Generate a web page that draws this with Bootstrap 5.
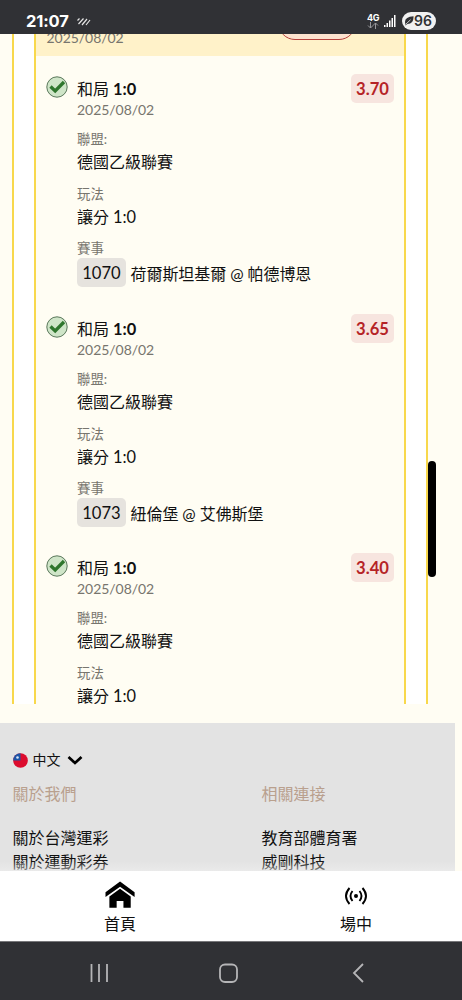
<!DOCTYPE html>
<html lang="zh-Hant">
<head>
<meta charset="utf-8">
<meta name="viewport" content="width=device-width, initial-scale=1">
<title>投注紀錄</title>
<link href="https://cdn.jsdelivr.net/npm/bootstrap@5.3.0/dist/css/bootstrap.min.css" rel="stylesheet">
<style>
body{font-family:Lato,"Noto Sans CJK TC",sans-serif;font-size:16px;line-height:24px;color:#111;background:#fffdf3;height:1000px;overflow:hidden}
svg{display:block;flex:none}
.status{height:34px;background:#303135;color:#fff;padding:8px 26px 0;font-family:Inter,sans-serif}
.clock{font-size:16.5px;font-weight:700;line-height:27px;letter-spacing:-.15px;width:51px}
.batt{width:34px;height:18px;background:#f1f1f1;color:#303135;font-size:14px;font-weight:600;line-height:18px;border-radius:9px;margin:4px 0 0 6px;padding-left:2px}
.net{font-size:9px;font-weight:700;line-height:8px;width:12px;letter-spacing:-.3px;padding-top:6px}
.slip-area{height:669.5px;padding:0 34px 0 12px}
.slip-outer,.slip-inner{border:solid #f8d84c;border-width:0 2px 0 2.5px;height:100%}
.slip-outer{background:#fff;padding:0 20px 0 20px}
.slip-inner{background:#fffdf3}
.slip-head{height:22px;background:#fff2c9;padding-left:10.5px}
.muted{color:#77756e}
.dt{font-size:14px;line-height:18px;letter-spacing:-.05px}
.slip-head .dt{line-height:7px}
.status-pill{width:78px;height:35px;border:1.3px solid #b5403a;border-radius:17px;background:#fde3cf;margin:-29px 48px 0 0}
.leg{height:239.6px;padding:21px 10px 0 10px}
.leg-main{margin-left:9px}
.tick{margin-top:-1px}
.ttl{line-height:24px;white-space:pre}
.num{font-size:16.4px;letter-spacing:-.1px}
.lbl{font-size:13.4px;line-height:20px;margin-top:10px}
.val{line-height:24px;margin:1px 0 0}
.odds{width:43px;height:29px;line-height:30px;margin-top:-3px;border-radius:5px;background:#f7e5df;color:#b52326;font-size:16.6px;font-weight:700;text-align:center}
.code{height:29px;width:49px;line-height:30px;border-radius:5px;background:#e6e3de;font-size:16.6px;text-align:center;margin-right:4.5px}
.game{line-height:31px;letter-spacing:-.06px}
.foot{margin-top:19.5px;width:455px;height:148px;background:#e3e3e3;padding:27px 0 0 12.5px;position:relative}
.foot-shade{height:10px;background:linear-gradient(#efefef00,#efefef90);left:0;right:0;bottom:0}
.lang{font-size:14px;line-height:20px}
.ftitle{color:#b9a08e;margin:12px 0 20px}
.tabs{height:71px;background:#fff;border-bottom:1px solid #77777a}
.tab1{width:240px}.tab2{width:232px}
.sys{height:58px;background:#303135}
.thumb{width:8px;height:116px;background:#000;border-radius:4px;left:427.5px;top:461px}
</style>
</head>
<body>
<header class="status d-flex">
 <span class="clock">21:07</span>
 <svg width="14" height="10" viewBox="0 0 14 10" style="margin-top:9px" fill="none" stroke="#e6e6e6" stroke-width="1.2"><path d="M.5 3.500 2.500 1.500M1.500 7 6.500 1.500M5 8 10 2M9 8 13 3"/></svg>
 <div class="net ms-auto">4G<svg width="12" height="7" viewBox="0 0 12 7" fill="none" stroke="#99999d" stroke-width="1"><path d="M3.500 0v6M1 3.500 3.500 6 6 3.500M8.500 7V1M6 3.500 8.500 1 11 3.500"/></svg></div>
 <svg width="12" height="14" viewBox="0 0 12 14" style="margin:6px 0 0 5px" fill="#fff"><path d="M0 11h1.500v2H0zM2.500 9h1.500v4H2.500zM5 6.500h1.500V13H5zM7.500 4H9v9H7.500zM10 1h1.500v12H10z"/></svg>
 <div class="batt d-flex align-items-center"><svg width="10" height="10" viewBox="0 0 10 10"><path d="M1.300 7.500Q-.5 1 9.500.300 10 8 3.500 8L1 9.500z" fill="#303135"/><path d="M1.500 8.500 6.500 3.800" stroke="#f1f1f1" stroke-width=".8"/></svg>96</div>
</header>
<main class="slip-area overflow-hidden">
 <div class="slip-outer"><div class="slip-inner">
  <div class="slip-head d-flex justify-content-between"><span class="dt muted">2025/08/02</span><span class="status-pill"></span></div>
  <section class="leg d-flex">
   <svg class="tick" width="22" height="22" viewBox="0 0 22 22"><circle cx="11" cy="11" r="10.200" fill="#cfe5c8" stroke="#59775a"/><path d="m4.500 10.500 4.700 4.500L18 6" fill="none" stroke="#2f762d" stroke-width="3.300"/></svg>
   <div class="leg-main flex-grow-1"><div class="ttl">和局 <b class="num">1:0</b></div><div class="dt muted">2025/08/02</div><div class="lbl muted">聯盟:</div><div class="val">德國乙級聯賽</div><div class="lbl muted">玩法</div><div class="val">讓分 <span class="num">1:0</span></div><div class="lbl muted" style="margin-top:9px">賽事</div><div class="d-flex"><span class="code">1070</span><span class="game">荷爾斯坦基爾 @ 帕德博恩</span></div></div>
   <div class="odds">3.70</div>
  </section>
  <section class="leg d-flex">
   <svg class="tick" width="22" height="22" viewBox="0 0 22 22"><circle cx="11" cy="11" r="10.200" fill="#cfe5c8" stroke="#59775a"/><path d="m4.500 10.500 4.700 4.500L18 6" fill="none" stroke="#2f762d" stroke-width="3.300"/></svg>
   <div class="leg-main flex-grow-1"><div class="ttl">和局 <b class="num">1:0</b></div><div class="dt muted">2025/08/02</div><div class="lbl muted">聯盟:</div><div class="val">德國乙級聯賽</div><div class="lbl muted">玩法</div><div class="val">讓分 <span class="num">1:0</span></div><div class="lbl muted" style="margin-top:9px">賽事</div><div class="d-flex"><span class="code">1073</span><span class="game">紐倫堡 @ 艾佛斯堡</span></div></div>
   <div class="odds">3.65</div>
  </section>
  <section class="leg d-flex">
   <svg class="tick" width="22" height="22" viewBox="0 0 22 22"><circle cx="11" cy="11" r="10.200" fill="#cfe5c8" stroke="#59775a"/><path d="m4.500 10.500 4.700 4.500L18 6" fill="none" stroke="#2f762d" stroke-width="3.300"/></svg>
   <div class="leg-main flex-grow-1"><div class="ttl">和局 <b class="num">1:0</b></div><div class="dt muted">2025/08/02</div><div class="lbl muted">聯盟:</div><div class="val">德國乙級聯賽</div><div class="lbl muted">玩法</div><div class="val">讓分 <span class="num">1:0</span></div></div>
   <div class="odds">3.40</div>
  </section>
 </div></div>
</main>
<footer class="foot overflow-hidden">
 <div class="lang d-flex align-items-center"><svg width="15" height="15" viewBox="0 0 15 15"><circle cx="7.500" cy="7.500" r="7.300" fill="#dc0c2e"/><path d="M7.500 7.500H.2A7.300 7.300 0 0 1 7.500.2z" fill="#1d55a8"/><circle cx="4.500" cy="4.500" r="1.300" fill="#d9e5f5"/></svg><span style="margin:0 6px 0 5px">中文</span><svg width="16" height="10" viewBox="0 0 16 10"><path d="m1.500 2 6.500 6 6.500-6" fill="none" stroke="#000" stroke-width="2.700"/></svg></div>
 <div class="d-flex"><div style="width:249px"><div class="ftitle">關於我們</div><div>關於台灣運彩</div><div>關於運動彩券</div></div><div><div class="ftitle">相關連接</div><div>教育部體育署</div><div>威剛科技</div></div></div>
 <div class="foot-shade position-absolute"></div>
</footer>
<nav class="tabs d-flex text-center">
 <div class="tab1 flex-shrink-0 d-flex flex-column align-items-center"><svg width="30" height="28" viewBox="0 0 30 28" style="margin:10px 0 5px"><path d="M15 0 30 11v5L15 5.500 0 16v-5zM15 7.500 26 15.500V27h-7.500v-7h-7v7H4V15.500z" transform="translate(.500 .500) scale(.970)"/></svg><span style="margin-top:-2px">首頁</span></div>
 <div class="tab2 flex-shrink-0 d-flex flex-column align-items-center"><svg width="24" height="20" viewBox="0 0 24 20" style="margin:15px 0 6px" fill="none" stroke="#000" stroke-width="1.900"><circle cx="12" cy="10" r="2" fill="#000" stroke="none"/><path d="M8.500 5Q4.500 10 8.500 15M15.500 5Q19.500 10 15.500 15M5.500 2Q-1.500 10 5.500 18M18.500 2Q25.500 10 18.500 18"/></svg><span>場中</span></div>
</nav>
<div class="sys"><svg width="462" height="58" viewBox="0 0 462 58" fill="none" stroke="#b5b5b7" stroke-width="1.800"><path d="M91.500 22v18M99 22v18M107 22v18M363 22 354 31l9 9"/><rect x="220" y="22.500" width="17" height="17.500" rx="5"/></svg></div>
<div class="thumb position-absolute"></div>
<script src="https://cdn.jsdelivr.net/npm/bootstrap@5.3.0/dist/js/bootstrap.bundle.min.js"></script>
</body>
</html>
